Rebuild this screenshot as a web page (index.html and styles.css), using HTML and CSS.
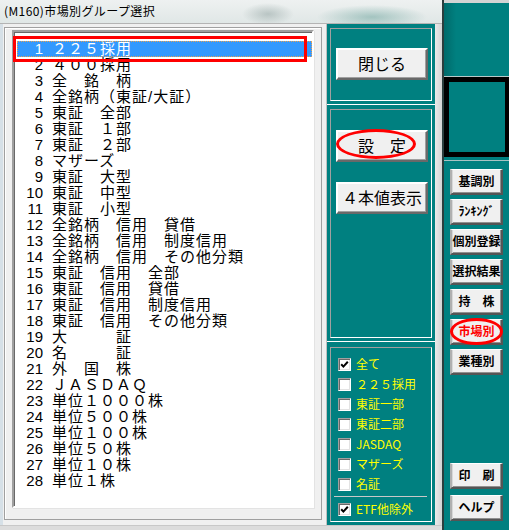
FILE: index.html
```html
<!DOCTYPE html>
<html lang="ja">
<head>
<meta charset="utf-8">
<title>(M160)市場別グループ選択</title>
<link rel="stylesheet" href="styles.css">
</head>
<body>
<div class="screen">
  <div class="dialog">
    <div class="titlebar"><span class="title">(M160)市場別グループ選択</span></div>
    <div class="client">
      <div class="leftpane">
        <div class="frame">
          <div class="list">
            <div class="row sel"><span class="no">1</span><span class="tx">２２５採用</span></div>
            <div class="row"><span class="no">2</span><span class="tx">４００採用</span></div>
            <div class="row"><span class="no">3</span><span class="tx">全　銘　柄</span></div>
            <div class="row"><span class="no">4</span><span class="tx">全銘柄（東証/大証）</span></div>
            <div class="row"><span class="no">5</span><span class="tx">東証　全部</span></div>
            <div class="row"><span class="no">6</span><span class="tx">東証　１部</span></div>
            <div class="row"><span class="no">7</span><span class="tx">東証　２部</span></div>
            <div class="row"><span class="no">8</span><span class="tx">マザーズ</span></div>
            <div class="row"><span class="no">9</span><span class="tx">東証　大型</span></div>
            <div class="row"><span class="no">10</span><span class="tx">東証　中型</span></div>
            <div class="row"><span class="no">11</span><span class="tx">東証　小型</span></div>
            <div class="row"><span class="no">12</span><span class="tx">全銘柄　信用　貸借</span></div>
            <div class="row"><span class="no">13</span><span class="tx">全銘柄　信用　制度信用</span></div>
            <div class="row"><span class="no">14</span><span class="tx">全銘柄　信用　その他分類</span></div>
            <div class="row"><span class="no">15</span><span class="tx">東証　信用　全部</span></div>
            <div class="row"><span class="no">16</span><span class="tx">東証　信用　貸借</span></div>
            <div class="row"><span class="no">17</span><span class="tx">東証　信用　制度信用</span></div>
            <div class="row"><span class="no">18</span><span class="tx">東証　信用　その他分類</span></div>
            <div class="row"><span class="no">19</span><span class="tx">大　　　証</span></div>
            <div class="row"><span class="no">20</span><span class="tx">名　　　証</span></div>
            <div class="row"><span class="no">21</span><span class="tx">外　国　株</span></div>
            <div class="row"><span class="no">22</span><span class="tx">ＪＡＳＤＡＱ</span></div>
            <div class="row"><span class="no">23</span><span class="tx">単位１０００株</span></div>
            <div class="row"><span class="no">24</span><span class="tx">単位５００株</span></div>
            <div class="row"><span class="no">25</span><span class="tx">単位１００株</span></div>
            <div class="row"><span class="no">26</span><span class="tx">単位５０株</span></div>
            <div class="row"><span class="no">27</span><span class="tx">単位１０株</span></div>
            <div class="row"><span class="no">28</span><span class="tx">単位１株</span></div>
            <div class="mark-rect"></div>
          </div>
        </div>
      </div>
      <div class="side">
        <div class="pnl p1">
          <div class="box">
            <div class="btn btn-close">閉じる</div>
          </div>
        </div>
        <div class="pnl p2">
          <div class="box">
            <div class="btn btn-set">設　定<span class="ring ring-set"></span></div>
            <div class="btn btn-four">４本値表示</div>
          </div>
        </div>
        <div class="pnl p3">
          <div class="box checks">
            <div class="chk"><span class="cb on"><svg viewBox="0 0 9 9"><polyline points="1.2,4.2 3.4,6.6 7.8,1.8"/></svg></span><span class="lbl">全て</span></div>
            <div class="chk"><span class="cb"></span><span class="lbl">２２５採用</span></div>
            <div class="chk"><span class="cb"></span><span class="lbl">東証一部</span></div>
            <div class="chk"><span class="cb"></span><span class="lbl">東証二部</span></div>
            <div class="chk"><span class="cb"></span><span class="lbl">JASDAQ</span></div>
            <div class="chk"><span class="cb"></span><span class="lbl">マザーズ</span></div>
            <div class="chk"><span class="cb"></span><span class="lbl">名証</span></div>
            <div class="sep"></div>
            <div class="chk"><span class="cb on"><svg viewBox="0 0 9 9"><polyline points="1.2,4.2 3.4,6.6 7.8,1.8"/></svg></span><span class="lbl">ETF他除外</span></div>
          </div>
        </div>
      </div>
      <div class="rframe"></div>
    </div>
    <div class="bframe"></div>
  </div>
  <div class="strip">
    <div class="strip-top"></div>
    <div class="strip-teal"></div>
    <div class="blackbox"></div>
    <div class="strip-line"></div>
    <div class="nav">
      <div class="nbtn">基調別</div>
      <div class="nbtn">ﾗﾝｷﾝｸﾞ</div>
      <div class="nbtn">個別登録</div>
      <div class="nbtn">選択結果</div>
      <div class="nbtn">持　株</div>
      <div class="nbtn red">市場別<span class="ring ring-mkt"></span></div>
      <div class="nbtn">業種別</div>
      <div class="nbtn print">印　刷</div>
      <div class="nbtn help">ヘルプ</div>
    </div>
  </div>
</div>
</body>
</html>
```
FILE: styles.css
```css
* { box-sizing: border-box; margin: 0; padding: 0; }
html, body { width: 509px; height: 530px; overflow: hidden; }
body {
  font-family: "Noto Sans CJK JP", "Noto Sans", sans-serif;
  background: #dfe5e4;
  color: #000;
}
.screen { display: flex; width: 509px; height: 530px; }

/* dialog */
.dialog { width: 442px; height: 530px; display: flex; flex-direction: column; }
.titlebar {
  height: 23px;
  padding: 3px 0 0 4px;
  font-size: 12px;
  line-height: 16px;
  background:
    radial-gradient(ellipse 55px 12px at 372px 17px, rgba(110,165,158,0.55), rgba(110,165,158,0)),
    radial-gradient(ellipse 26px 11px at 268px 14px, rgba(130,150,148,0.45), rgba(130,150,148,0)),
    linear-gradient(#eef1f1, #e0e7e6);
}
.title { white-space: nowrap; letter-spacing: 0.4px; }
.client { display: flex; height: 502px; border-top: 1px solid #b4b4b4; }

/* left pane with list */
.leftpane {
  width: 326px;
  background: #f0f0f0;
  border-left: 3px solid #d6e0e7;
  padding: 3px 4px 5px 1px;
  display: flex;
}
.frame {
  flex: 1;
  display: flex;
  border: 1px solid #a0a0a0;
  box-shadow: inset 1px 1px 0 #fff;
  padding: 2px 7px 11px 7px;
}
.list {
  flex: 1;
  position: relative;
  background: #fff;
  border: 2px solid;
  border-color: #a0a0a0 #fff #fff #a0a0a0;
  box-shadow: inset 1px 1px 0 #696969, 1px 1px 0 #e3e3e3;
  padding: 9px 0 0 3px;
  font-family: "Liberation Sans", "Noto Sans CJK JP", sans-serif;
  font-size: 15px;
  line-height: 16px;
}
.row { display: flex; height: 16px; white-space: pre; }
.no { width: 26px; text-align: right; display: inline-block; }
.tx { margin-left: 9px; letter-spacing: 1px; }
.row.sel {
  background: #3399ff;
  color: #fff;
  outline: 1px dotted #e8a050;
  outline-offset: -1px;
}
.mark-rect {
  position: absolute;
  left: -1px;
  top: 4px;
  width: 294px;
  height: 26px;
  border: 3px solid #ff0000;
}

/* teal side */
.side {
  width: 109px;
  background: #008080;
  border-left: 1px solid #c0c0c0;
  display: flex;
  flex-direction: column;
}
.pnl { border-bottom: 1px solid #fff; padding: 4px 3px 3px 3px; display: flex; }
.p1 { height: 81px; }
.p2 { height: 237px; }
.p3 { height: 183px; border-bottom: 0; padding-top: 5px; }
.box {
  flex: 1;
  border: 1px solid;
  border-color: #a0a0a0 #fff #fff #a0a0a0;
}
.btn {
  position: relative;
  width: 92px;
  height: 32px;
  margin-left: 5px;
  background: #f0f0f0;
  border: 2px solid;
  border-color: #fff #696969 #696969 #fff;
  box-shadow: inset -1px -1px 0 #a0a0a0;
  font-size: 16px;
  line-height: 27px;
  text-align: center;
  white-space: nowrap;
}
.btn-close { margin-top: 19px; }
.btn-set { margin-top: 20px; }
.btn-four { margin-top: 20px; }
.ring {
  position: absolute;
  border: 3px solid #ff0000;
  border-radius: 50%;
}
.ring-set { left: -2px; top: -3px; width: 80px; height: 30px; }

.checks { padding-top: 6px; }
.chk { display: flex; align-items: center; height: 20px; padding-left: 7px; }
.cb {
  width: 13px;
  height: 13px;
  background: #fff;
  border: 1px solid;
  border-color: #a0a0a0 #fff #fff #a0a0a0;
  box-shadow: inset 1px 1px 0 #696969, inset -1px -1px 0 #e3e3e3;
  display: flex;
  align-items: center;
  justify-content: center;
}
.cb svg { width: 9px; height: 9px; }
.cb polyline { fill: none; stroke: #000; stroke-width: 2; }
.lbl {
  margin-left: 5px;
  color: #ffff00;
  font-size: 12px;
  line-height: 20px;
  white-space: nowrap;
}
.sep { height: 1px; background: #c8c8c8; margin: 2px 4px 2px 3px; }

.rframe {
  width: 7px;
  background: linear-gradient(to right, #eaeaea, #d4d4d4);
}
.bframe { flex: 1; background: #dcdcdc; border-top: 1px solid #c8c8c8; }

/* right strip */
.strip {
  width: 67px;
  height: 530px;
  background: #008080;
  border-left: 2px solid #2c3e3e;
  display: flex;
  flex-direction: column;
}
.strip-top { height: 3px; background: #d4d4d4; }
.strip-teal { height: 74px; border-bottom: 1px solid #b8c8c8; background: linear-gradient(to right, #006a6a, #008080 12px); }
.blackbox {
  height: 80px;
  border: 5px solid #000;
  border-right-width: 4px;
  background: #008080;
}
.strip-line { height: 4px; border-bottom: 1px solid #a8c4c4; }
.nav { padding: 8px 0 0 6px; display: flex; flex-direction: column; }
.nbtn {
  position: relative;
  width: 53px;
  height: 26px;
  margin-bottom: 4px;
  background: #f0f0f0;
  border-style: solid;
  border-width: 1px 2px 2px 2px;
  border-color: #fff #555 #555 #b0b0b0;
  box-shadow: inset 1px 0 0 #d8d8d8, inset -1px -1px 0 #909090;
  font-size: 12px;
  font-weight: bold;
  line-height: 22px;
  text-align: center;
  white-space: nowrap;
}
.nbtn.red { color: #ff0000; }
.nbtn.print { margin-top: 84px; margin-bottom: 6px; }
.ring-mkt { left: -2px; top: -2px; width: 53px; height: 27px; }
```
